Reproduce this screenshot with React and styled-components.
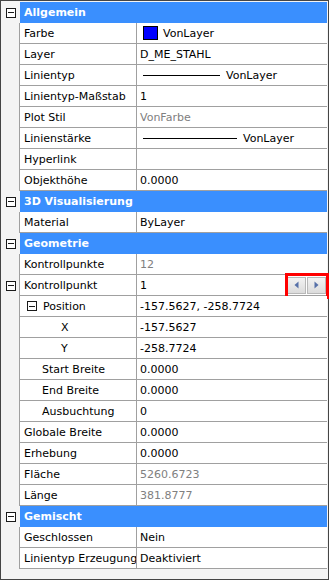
import React from "react";
import styled, { createGlobalStyle } from "styled-components";

const Global = createGlobalStyle`
  html, body { margin: 0; padding: 0; background: #ffffff; }
  body { font-family: "DejaVu Sans", Verdana, sans-serif; font-size: 11px; }
`;

const Panel = styled.div`
  box-sizing: border-box;
  width: 329px;
  height: 580px;
  border: 1px solid #454545;
  padding: 1px 1px 0 0;
  background: #f4f4f4;
  display: flex;
  flex-direction: column;
`;

const Row = styled.div`
  display: grid;
  grid-template-columns: 18px 118px 1fr;
  height: 21px;
`;

const CatRow = styled.div`
  display: grid;
  grid-template-columns: 18px 1fr;
  height: 21px;
`;

const Gutter = styled.div`
  display: flex;
  align-items: center;
  padding-left: 5px;
  background: #f4f4f4;
`;

const CatCell = styled.div`
  background: #3a8ffe;
  border-left: 1px solid #f4f4f4;
  color: #ffffff;
  font-weight: bold;
  line-height: 21px;
  padding-left: 4px;
  white-space: nowrap;
`;

const LabelCell = styled.div`
  display: flex;
  align-items: center;
  gap: 6px;
  border-left: 1px solid #a0a0a0;
  border-right: 1px solid #a0a0a0;
  border-bottom: 1px solid #a0a0a0;
  background: #ffffff;
  color: #000000;
  white-space: nowrap;
  overflow: hidden;
  padding-left: ${(p) => p.$pad}px;
`;

const ValueCell = styled.div`
  position: relative;
  display: flex;
  align-items: center;
  border-bottom: 1px solid #a0a0a0;
  background: #ffffff;
  color: ${(p) => (p.$muted ? "#808080" : "#000000")};
  white-space: nowrap;
  overflow: visible;
  padding-left: 3px;
`;

const Expander = styled.span`
  box-sizing: border-box;
  flex: none;
  width: 10px;
  height: 10px;
  border: 1px solid #1a1a1a;
  background: #ffffff;
  display: flex;
  align-items: center;
  justify-content: center;
  &::after {
    content: "";
    width: 6px;
    height: 1px;
    background: #1a1a1a;
  }
`;

const Swatch = styled.span`
  box-sizing: border-box;
  width: 15px;
  height: 14px;
  border: 1px solid #000;
  background: #0000ff;
  margin: 0 5px 0 3px;
`;

const LineSample = styled.span`
  width: ${(p) => p.$w}px;
  height: 1px;
  background: #000;
  margin: 0 6px 0 3px;
`;

const Spin = styled.div`
  margin-left: auto;
  margin-right: 1px;
  display: flex;
  gap: 1px;
`;

const SpinButton = styled.span`
  box-sizing: border-box;
  width: 19px;
  height: 17px;
  border: 1px solid #b8b8b8;
  background: linear-gradient(#f2f2f2, #dcdcdc);
  display: flex;
  align-items: center;
  justify-content: center;
`;

const Highlight = styled.div`
  position: absolute;
  right: -2px;
  top: -2px;
  width: 44px;
  height: 26px;
  box-sizing: border-box;
  border: 3px solid #ff0000;
  pointer-events: none;
`;

const Filler = styled.div`
  flex: 1;
  background: #f4f4f4;
`;

const rows = [
  { cat: "Allgemein" },
  { label: "Farbe", value: "VonLayer", kind: "color" },
  { label: "Layer", value: "D_ME_STAHL" },
  { label: "Linientyp", value: "VonLayer", kind: "line", w: 77 },
  { label: "Linientyp-Maßstab", value: "1" },
  { label: "Plot Stil", value: "VonFarbe", muted: true },
  { label: "Linienstärke", value: "VonLayer", kind: "line", w: 94 },
  { label: "Hyperlink", value: "" },
  { label: "Objekthöhe", value: "0.0000" },
  { cat: "3D Visualisierung" },
  { label: "Material", value: "ByLayer" },
  { cat: "Geometrie" },
  { label: "Kontrollpunkte", value: "12", muted: true },
  { label: "Kontrollpunkt", value: "1", gutter: true, spin: true },
  { label: "Position", value: "-157.5627, -258.7724", expander: true },
  { label: "X", value: "-157.5627", indent: 2 },
  { label: "Y", value: "-258.7724", indent: 2 },
  { label: "Start Breite", value: "0.0000", indent: 1 },
  { label: "End Breite", value: "0.0000", indent: 1 },
  { label: "Ausbuchtung", value: "0", indent: 1 },
  { label: "Globale Breite", value: "0.0000" },
  { label: "Erhebung", value: "0.0000" },
  { label: "Fläche", value: "5260.6723", muted: true },
  { label: "Länge", value: "381.8777", muted: true },
  { cat: "Gemischt" },
  { label: "Geschlossen", value: "Nein" },
  { label: "Linientyp Erzeugung", value: "Deaktiviert" },
];

const Arrow = ({ dir }) => (
  <svg width="5" height="8" viewBox="0 0 5 8">
    <path
      d={dir === "left" ? "M4.5 0.5 L0.5 4 L4.5 7.5 Z" : "M0.5 0.5 L4.5 4 L0.5 7.5 Z"}
      fill="#5670a8"
    />
  </svg>
);

function padFor(r) {
  if (r.expander) return 7;
  if (r.indent === 1) return 22;
  if (r.indent === 2) return 41;
  return 4;
}

function Value({ r }) {
  if (r.kind === "color")
    return (
      <>
        <Swatch />
        {r.value}
      </>
    );
  if (r.kind === "line")
    return (
      <>
        <LineSample $w={r.w} />
        {r.value}
      </>
    );
  return r.value;
}

export default function App() {
  return (
    <>
      <Global />
      <Panel>
        {rows.map((r, i) =>
          r.cat ? (
            <CatRow key={i}>
              <Gutter>
                <Expander />
              </Gutter>
              <CatCell>{r.cat}</CatCell>
            </CatRow>
          ) : (
            <Row key={i}>
              <Gutter>{r.gutter && <Expander />}</Gutter>
              <LabelCell $pad={padFor(r)}>
                {r.expander && <Expander />}
                {r.label}
              </LabelCell>
              <ValueCell $muted={r.muted}>
                <Value r={r} />
                {r.spin && (
                  <>
                    <Spin>
                      <SpinButton>
                        <Arrow dir="left" />
                      </SpinButton>
                      <SpinButton>
                        <Arrow dir="right" />
                      </SpinButton>
                    </Spin>
                    <Highlight />
                  </>
                )}
              </ValueCell>
            </Row>
          )
        )}
        <Filler />
      </Panel>
    </>
  );
}
